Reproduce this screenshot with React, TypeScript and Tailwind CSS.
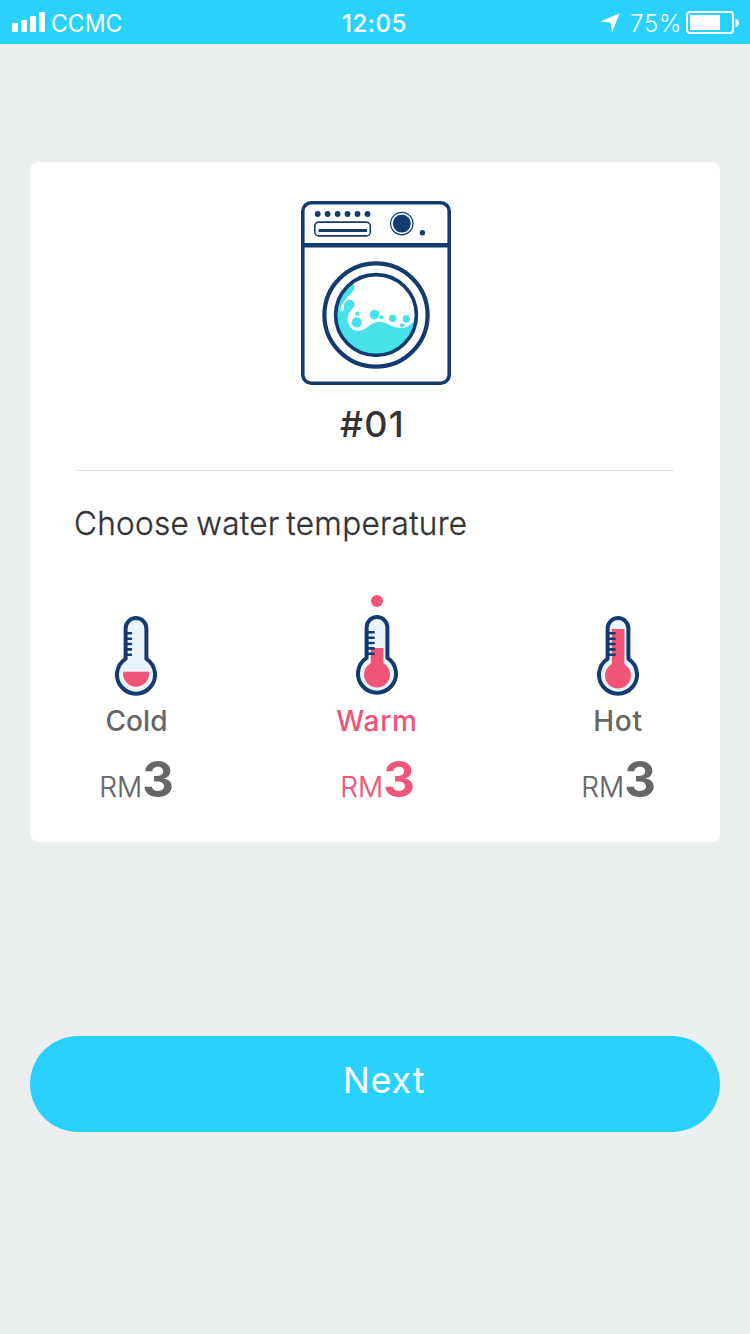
type Level = 'cold' | 'warm' | 'hot';

const NAVY = '#133b70';
const PINK = '#f05477';
const AQUA = '#47e2e9';

function WashingMachine() {
  return (
    <svg width="150" height="184" viewBox="0 0 150 184" fill="none" className="block">
      <rect x="1.8" y="1.8" width="146.4" height="180.4" rx="8.5" stroke={NAVY} strokeWidth="3.6" />
      <path d="M2 44.3H148" stroke={NAVY} strokeWidth="4.6" />
      {[16.7, 26.6, 36.6, 46.5, 56.5, 66.5].map((x) => (
        <circle key={x} cx={x} cy="13" r="2.9" fill={NAVY} />
      ))}
      <rect x="13.8" y="21.1" width="55.5" height="13.8" rx="4" stroke={NAVY} strokeWidth="1.6" />
      <path d="M17.6 29.6H66" stroke={NAVY} strokeWidth="3" />
      <circle cx="100.8" cy="22.6" r="11.2" stroke={NAVY} strokeWidth="1.2" />
      <circle cx="100.8" cy="22.6" r="9" fill={NAVY} />
      <circle cx="121.4" cy="31.8" r="2.7" fill={NAVY} />
      <clipPath id="drum">
        <circle cx="258" cy="195" r="120" />
      </clipPath>
      <g transform="translate(-11 49) scale(.33333)" fill={AQUA}>
        <path
          clipPath="url(#drum)"
          d="M178 100C192 98 198 112 190 122C182 134 160 150 152 172C150 180 153 185 158 183C163 180 160 168 164 160C170 148 186 146 192 156C198 168 188 175 181 184C170 198 170 216 180 230C190 243 208 246 224 237C240 227 250 214 270 215C292 217 310 235 335 234C352 233 366 222 376 206L390 330H120V100Z"
        />
        <circle cx="200" cy="217" r="15.5" />
        <circle cx="202" cy="191" r="6.5" />
        <circle cx="253.5" cy="194" r="14.5" />
        <circle cx="274.5" cy="202" r="6.5" />
        <circle cx="308" cy="205" r="11" />
        <circle cx="349" cy="207" r="11" />
        <circle cx="336" cy="226" r="6.5" />
      </g>
      <circle cx="75" cy="114" r="51.6" stroke={NAVY} strokeWidth="4.2" />
      <circle cx="75" cy="114" r="40.4" stroke={NAVY} strokeWidth="3.6" />
    </svg>
  );
}

function Thermometer({ level }: { level: Level }) {
  return (
    <svg width="42" height="80" viewBox="0 0 42 80" fill="none" className="block">
      <path
        d="M10.6 12.4a10.4 10.4 0 0 1 20.8 0V42.8a19 19 0 1 1 -20.8 0Z"
        fill="#ebf4f8"
        stroke={NAVY}
        strokeWidth="4"
        strokeLinejoin="round"
      />
      {level === 'cold' ? (
        <path d="M8.2 55.7H33.9a13 13 0 1 1 -25.7 0Z" fill={PINK} />
      ) : (
        <>
          <circle cx="21" cy="59.6" r="13" fill={PINK} />
          <rect x="14.8" y={level === 'warm' ? 33 : 13} width="12.6" height={level === 'warm' ? 20 : 40} fill={PINK} />
        </>
      )}
      <path
        d={
          level === 'cold'
            ? 'M11 17.3h5M11 22.7h5M11 28h5M11 33.4h5M11 38.7h5'
            : 'M11 17.3h6.6M11 22.7h6.6M11 28h6.6M11 33.4h6.6M11 38.7h6.6'
        }
        stroke={NAVY}
        strokeWidth="2.6"
        strokeLinecap="round"
      />
    </svg>
  );
}

function Option({ level, label, selected = false }: { level: Level; label: string; selected?: boolean }) {
  return (
    <button className={`flex w-[82px] flex-col items-center ${selected ? 'text-[#f05477]' : 'text-[#666666]'}`}>
      <span className={`size-3 rounded-full ${selected ? 'bg-[#f05477]' : 'bg-transparent'}`} />
      <span className={selected ? 'mt-2 mb-px' : 'mt-[9px]'}>
        <Thermometer level={level} />
      </span>
      <span
        className={`mt-[7px] text-[28px] leading-9 font-medium whitespace-nowrap ${level === 'cold' ? 'ml-px tracking-[0.1px]' : 'tracking-[0.7px]'}`}
      >
        {label}
      </span>
      <span className="mt-[11px] flex h-[60px] items-baseline whitespace-nowrap">
        <span className="text-[28px] leading-[60px] font-light [-webkit-text-stroke:0.25px]">RM</span>
        <span className="text-[49px] leading-[60px] font-bold tracking-[-1px]">3</span>
      </span>
    </button>
  );
}

function StatusBar() {
  return (
    <header className="grid h-11 grid-cols-3 items-center bg-[#29d1ff] pt-px pr-[11px] pl-3 text-white">
      <div className="flex items-center">
        <svg width="34" height="20" viewBox="0 0 34 20" fill="currentColor" className="mb-0.5">
          <rect y="11" width="6" height="9" rx="1" />
          <rect x="9" y="8" width="6" height="12" rx="1" />
          <rect x="18" y="4" width="6" height="16" rx="1" />
          <rect x="27" width="6" height="20" rx="1" />
        </svg>
        <span className="mt-0.5 ml-[5px] origin-left scale-x-[0.96] text-2xl leading-none">CCMC</span>
      </div>
      <span className="mt-0.5 mr-[2px] text-center text-2xl leading-none font-medium tracking-[0.5px]">12:05</span>
      <div className="flex items-center justify-end">
        <svg width="20" height="20" viewBox="0 0 20 20" fill="currentColor">
          <path d="M19.5 .5L12 19.5L10.5 9.5L0 8.5Z" />
        </svg>
        <span className="mt-0.5 ml-[10px] text-2xl leading-none font-light tracking-[0.6px]">75%</span>
        <svg width="53" height="24" viewBox="0 0 53 24" fill="none" className="ml-1">
          <rect x="1" y="1" width="46" height="21" rx="3" stroke="currentColor" strokeWidth="2" />
          <rect x="4" y="4" width="30" height="15" fill="currentColor" />
          <path d="M49.5 7.5Q53 9 53 12T49.5 16.5Z" fill="currentColor" />
        </svg>
      </div>
    </header>
  );
}

export default function App() {
  return (
    <div className="flex h-[1334px] w-[750px] flex-col bg-[#ebeff0] font-['Inter','Liberation_Sans',sans-serif]">
      <StatusBar />
      <main className="flex flex-col px-[30px] pt-[118px]">
        <section className="flex h-[680px] flex-col rounded-lg bg-white pt-[39px]">
          <div className="flex flex-col items-center pl-0.5">
            <WashingMachine />
            <h1 className="mt-[15px] mr-[7px] text-[36px] leading-[48px] font-medium tracking-[1.2px] text-[#333333]">
              #01
            </h1>
          </div>
          <hr className="mt-[22px] mr-[46px] ml-[46px] border-t border-[#e3e3e3]" />
          <h2 className="mt-[32px] ml-[44px] origin-left scale-x-[0.955] text-[33px] leading-10 font-light tracking-[0.3px] whitespace-nowrap text-[#333333] [-webkit-text-stroke:0.35px] [word-spacing:-2.2px]">
            Choose water temperature
          </h2>
          <div className="mt-[52px] flex w-[629px] justify-between pl-[65px]">
            <Option level="cold" label="Cold" />
            <Option level="warm" label="Warm" selected />
            <Option level="hot" label="Hot" />
          </div>
        </section>
        <button className="mt-[194px] flex h-24 items-center justify-center rounded-full bg-[#29d1ff] pb-[9px] pl-[18px] text-[36px] tracking-[0.8px] text-white">
          Next
        </button>
      </main>
    </div>
  );
}
